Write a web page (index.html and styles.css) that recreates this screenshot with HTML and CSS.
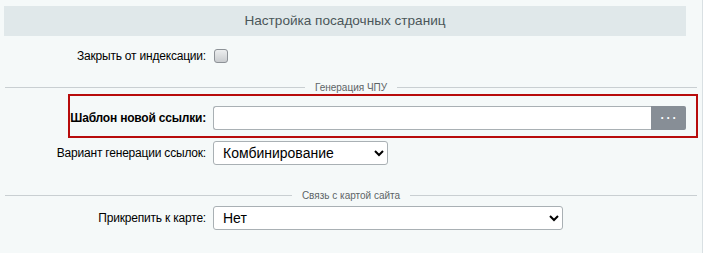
FILE: index.html
```html
<!DOCTYPE html>
<html lang="ru">
<head>
    <meta charset="UTF-8">
    <title>Настройка посадочных страниц</title>
    <link rel="stylesheet" href="styles.css">
</head>
<body>
    <div class="panel">
        <div class="panel-title">Настройка посадочных страниц</div>

        <div class="row row-check">
            <label class="row-label" for="noindex">Закрыть от индексации:</label>
            <div class="row-field"><input type="checkbox" id="noindex" class="check"></div>
        </div>

        <div class="divider"><span>Генерация ЧПУ</span></div>

        <div class="row row-marked">
            <label class="row-label" for="tpl">Шаблон новой ссылки:</label>
            <div class="row-field input-group">
                <input type="text" id="tpl" class="text-input">
                <button class="dots-btn" type="button">···</button>
            </div>
        </div>

        <div class="row row-select">
            <label class="row-label" for="variant">Вариант генерации ссылок:</label>
            <div class="row-field">
                <select id="variant" class="select select-short">
                    <option>Комбинирование</option>
                </select>
            </div>
        </div>

        <div class="divider divider-map"><span>Связь с картой сайта</span></div>

        <div class="row row-select">
            <label class="row-label" for="attach">Прикрепить к карте:</label>
            <div class="row-field">
                <select id="attach" class="select select-long">
                    <option>Нет</option>
                </select>
            </div>
        </div>
    </div>
</body>
</html>
```

FILE: styles.css
```css
body {
    margin: 0;
    background: #fff;
    font-family: 'Liberation Sans', Arial, sans-serif;
    font-size: 12px;
    color: #000;
}

.panel {
    width: 703px;
    height: 253px;
    box-sizing: border-box;
    border-right: 1px solid #d9e0e3;
    background: #f5f9f9;
    padding: 6px 0 0 4px;
}

.panel-title {
    width: 682px;
    height: 30px;
    line-height: 30px;
    background: #e0e8ea;
    text-align: center;
    font-size: 13.6px;
    color: #4b5659;
}

.row {
    display: grid;
    grid-template-columns: 202px 1fr;
    column-gap: 7px;
    align-items: center;
}

.row-label {
    text-align: right;
    white-space: nowrap;
    letter-spacing: -0.2px;
}

.row-check {
    height: 26px;
    margin-top: 7px;
}

.check {
    appearance: none;
    display: block;
    width: 14px;
    height: 14px;
    margin: 0 0 0 1px;
    border: 1px solid #8d9297;
    border-radius: 3px;
    background: linear-gradient(#eceeef, #c9cccf);
}

.divider {
    display: flex;
    align-items: center;
    gap: 10px;
    width: 692px;
    margin: 11px 0 0 1px;
    height: 14px;
    font-size: 10px;
    color: #5d6466;
}

.divider::before,
.divider::after {
    content: '';
    flex: 1;
    border-top: 1px solid #c9cfd2;
}

.row-marked {
    margin: 0 0 0 64px;
    width: 630px;
    box-sizing: border-box;
    border: 2px solid #b80c0c;
    padding: 10px 10px 6px 0;
    grid-template-columns: 136px 1fr;
}

.row-marked .row-label {
    font-weight: bold;
}

.input-group {
    display: flex;
    height: 24px;
}

.text-input {
    flex: 1;
    min-width: 0;
    height: 24px;
    box-sizing: border-box;
    border: 1px solid #a9b0b4;
    border-right: none;
    border-radius: 3px 0 0 3px;
    background: #fff;
    font: inherit;
}

.dots-btn {
    width: 35px;
    height: 24px;
    border: none;
    border-radius: 0 2px 2px 0;
    background: #878e96;
    color: #fff;
    font-weight: bold;
    font-size: 12px;
    letter-spacing: 2px;
    padding: 0 0 0 2px;
}

.row-select {
    margin-top: 3px;
}

.select {
    height: 24px;
    border: 1px solid #a9b0b4;
    border-radius: 3px;
    background: #fff;
    font-family: inherit;
    font-size: 14px;
    font-weight: normal;
    color: #000;
    padding: 0 5px;
}

.select-short {
    width: 175px;
}

.select-long {
    width: 350px;
}

.divider-map {
    margin-top: 23px;
    margin-bottom: 4px;
}
```
